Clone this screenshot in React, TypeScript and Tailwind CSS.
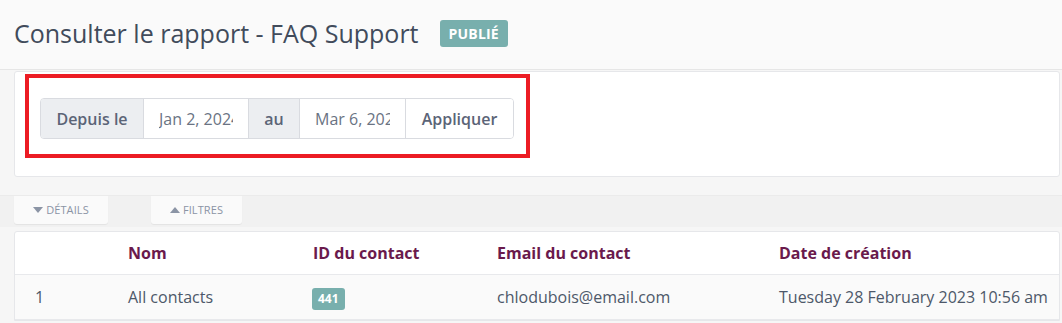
import React from "react";

function Caret({ up }: { up?: boolean }) {
  return (
    <svg width="10" height="6" viewBox="0 0 10 6" className="mr-[3px]">
      {up ? <path d="M0 6 L5 0 L10 6 Z" fill="#8b94a5" /> : <path d="M0 0 L10 0 L5 6 Z" fill="#8b94a5" />}
    </svg>
  );
}

export default function App() {
  const font = { fontFamily: '"Open Sans", "Noto Sans", sans-serif' };
  return (
    <div className="w-[1062px] h-[323px] overflow-hidden bg-[#f6f6f6] relative" style={font}>
      {/* Header */}
      <div className="h-[70px] bg-[#fafafa] border-b border-[#e6e6e6] flex items-center pl-[14px] pb-[3px]">
        <h1 className="text-[25px] leading-[32px] text-[#414b5b] font-normal">
          Consulter le rapport - FAQ Support
        </h1>
        <span className="ml-[21px] h-[27px] px-[9px] rounded-[3px] bg-[#78afad] text-white text-[14px] font-bold flex items-center tracking-[0.2px]">
          PUBLIÉ
        </span>
      </div>

      {/* Date filter card */}
      <div className="mt-[1px] ml-[14px] mr-[2px] h-[106px] bg-white border border-[#e6e7ea] rounded-[3px] pl-[25px] pt-[26px]">
        <div className="flex h-[41px] w-[474px] border border-[#d9dbe0] rounded-[4px] overflow-hidden text-[16px]">
          <div className="w-[103px] bg-[#eceef1] flex items-center justify-center font-semibold text-[#5b6477] border-r border-[#d9dbe0]">
            Depuis le
          </div>
          <div className="w-[105px] bg-white flex items-center pl-[15px] pr-[15px] border-r border-[#d9dbe0] overflow-hidden">
            <span className="block overflow-hidden whitespace-nowrap text-[#6a7383]">Jan 2, 2024</span>
          </div>
          <div className="w-[51px] bg-[#eceef1] flex items-center justify-center font-semibold text-[#5b6477] border-r border-[#d9dbe0]">
            au
          </div>
          <div className="w-[106px] bg-white flex items-center pl-[15px] pr-[15px] border-r border-[#d9dbe0] overflow-hidden">
            <span className="block overflow-hidden whitespace-nowrap text-[#6a7383]">Mar 6, 2024</span>
          </div>
          <div className="flex-1 bg-white flex items-center justify-center font-semibold text-[#5b6477]">
            Appliquer
          </div>
        </div>
      </div>

      {/* Red annotation */}
      <div className="absolute left-[25px] top-[74px] w-[505px] h-[84px] border-[4px] border-[#ec1c24] pointer-events-none" />

      {/* Tabs strip */}
      <div className="mt-[18px] h-[32px] bg-[#f1f1f1] border-t border-[#ebebeb] flex items-start pl-[14px] gap-[43px]">
        <div className="w-[94px] h-[28px] bg-[#fafafa] rounded-b-[3px] shadow-[0_1px_1px_rgba(0,0,0,0.06)] flex items-center justify-center text-[11px] text-[#8b94a5] tracking-[0.1px]">
          <Caret />
          DÉTAILS
        </div>
        <div className="w-[91px] h-[28px] bg-[#fafafa] rounded-b-[3px] shadow-[0_1px_1px_rgba(0,0,0,0.06)] flex items-center justify-center text-[11px] text-[#8b94a5] tracking-[0.1px]">
          <Caret up />
          FILTRES
        </div>
      </div>

      {/* Table */}
      <div className="mt-[4px] ml-[14px] mr-[2px] bg-white border border-[#e6e7ea] rounded-t-[3px]">
        <div className="grid grid-cols-[98px_185px_184px_282px_1fr] h-[43px] items-center border-b border-[#e8e9ec] text-[16px] font-bold text-[#6a1a4c]">
          <div className="pl-[20px]"></div>
          <div className="pl-[15px]">Nom</div>
          <div className="pl-[15px]">ID du contact</div>
          <div className="pl-[15px]">Email du contact</div>
          <div className="pl-[15px] whitespace-nowrap">Date de création</div>
        </div>
        <div className="grid grid-cols-[98px_185px_184px_282px_1fr] h-[45px] items-center border-b border-[#e8e9ec] bg-[#fafafa] text-[16px] text-[#4d5869]">
          <div className="pl-[20px]">1</div>
          <div className="pl-[15px]">All contacts</div>
          <div className="pl-[14px]">
            <span className="inline-flex items-center h-[22px] px-[6px] rounded-[3px] bg-[#78afad] text-white text-[12px] font-bold">441</span>
          </div>
          <div className="pl-[15px]">chlodubois@email.com</div>
          <div className="pl-[15px] whitespace-nowrap">Tuesday 28 February 2023 10:56 am</div>
        </div>
      </div>
    </div>
  );
}
